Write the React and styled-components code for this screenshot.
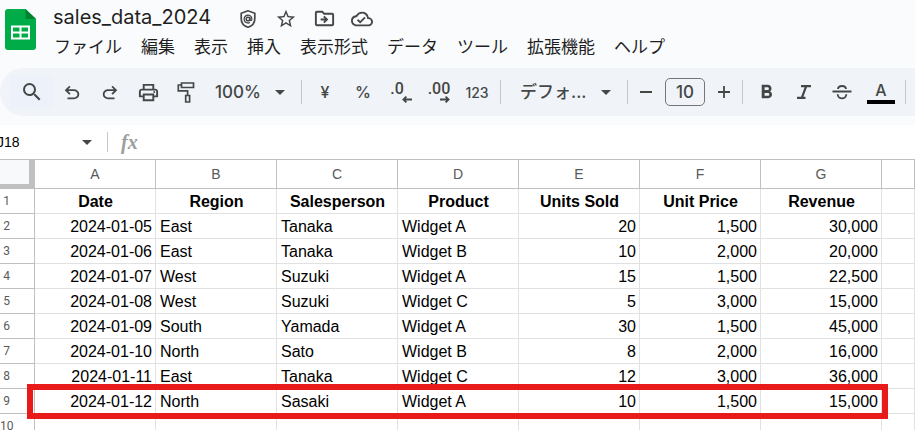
import React from 'react';
import styled, { createGlobalStyle } from 'styled-components';
import {
  MdStarBorder,
  MdOutlineDriveFileMove,
  MdOutlineCloudDone,
  MdSearch,
  MdOutlinePrint,
  MdFormatBold,
} from 'react-icons/md';

const GlobalStyle = createGlobalStyle`
  * {
    box-sizing: border-box;
  }

  body {
    margin: 0;
    background-color: #f9fbfd;
    overflow: hidden;
  }

  button, input, select {
    font: inherit;
    color: inherit;
    border: none;
    background: none;
    padding: 0;
    margin: 0;
  }
`;

const Page = styled.div`
  font-family: Inter, "Noto Sans CJK JP", sans-serif;
  color: #444746;
`;

// Header with the logo, file name and menus
const Header = styled.header`
  display: flex;
  gap: 17px;
  height: 68px;
  padding-left: 5px;
`;

const Logo = styled.svg`
  flex: none;
  width: 31px;
  height: 41px;
  margin-top: 9px;
`;

const HeaderMain = styled.div`
  flex: 1;
  min-width: 0;
`;

const TitleRow = styled.div`
  display: flex;
  align-items: center;
  height: 34px;
`;

const Title = styled.h1`
  margin: 0 18px 0 0;
  font-size: 20px;
  font-weight: 400;
  line-height: 34px;
  color: #1f1f1f;
`;

const TitleButton = styled.button`
  display: flex;
  align-items: center;
  justify-content: center;
  width: 38px;
  height: 34px;
  padding-top: 3px;
`;

const MenuBar = styled.nav`
  display: flex;
  gap: 19px;
  padding-left: 1px;
  white-space: nowrap;
`;

const MenuButton = styled.button`
  font-family: "Noto Sans CJK JP", sans-serif;
  font-size: 17px;
  line-height: 24px;
  color: #1f1f1f;
`;

// Toolbar
const Toolbar = styled.div`
  display: flex;
  align-items: center;
  height: 48px;
  padding-left: 10px;
  border-radius: 24px 0 0 24px;
  background-color: #f0f4f9;
  font-size: 17px;
  font-weight: 500;
  overflow: hidden;

  > * {
    flex: none;
  }
`;

const ToolButton = styled.button`
  display: flex;
  align-items: center;
  justify-content: center;
  width: ${({ $width }) => $width || 38}px;
  height: 34px;
  font-size: ${({ $small }) => ($small ? 14 : 16)}px;
`;

const SearchButton = styled(ToolButton)`
  background-color: #edf2fa;
`;

const Divider = styled.span`
  width: 1px;
  height: 24px;
  margin: 0 4px;
  background-color: #c7c7c7;
`;

const SelectWrap = styled.label`
  display: flex;
  align-items: center;
  justify-content: space-between;
  width: ${({ $width }) => $width}px;
  padding: 0 12px 0 ${({ $indent }) => $indent}px;
`;

const ToolSelect = styled.select`
  appearance: none;
  width: ${({ $width }) => $width}px;
  line-height: 24px;
`;

const SizeInput = styled.input`
  width: 40px;
  height: 28px;
  margin: 0 5px;
  border: 1px solid #747775;
  border-radius: 5px;
  text-align: center;
`;

const Decimal = styled.span`
  display: flex;
  flex-direction: column;
  align-items: flex-end;
  margin-right: ${({ $less }) => ($less ? 8 : 0)}px;
  font-family: Roboto, sans-serif;
  line-height: 16px;

  svg {
    margin-top: -1px;
    margin-right: ${({ $less }) => ($less ? -8 : 0)}px;
  }
`;

const TextColor = styled.span`
  width: 28px;
  border-bottom: 4px solid #000;
  line-height: 20px;
`;

// Formula bar
const FormulaBar = styled.div`
  display: flex;
  align-items: center;
  height: 34px;
  margin-top: 9px;
  background-color: #fff;
  font-family: "Liberation Sans", sans-serif;
`;

const NameBox = styled.input`
  width: 85px;
  margin-left: -3px;
  font-size: 14px;
  color: #000;
`;

const BarDivider = styled(Divider)`
  height: 20px;
  margin: 0 13px 0 15px;
`;

const FormulaLabel = styled.label`
  font-family: "Liberation Serif", serif;
  font-size: 20px;
  font-style: italic;
  font-weight: 700;
  color: #9a9d9c;
`;

const FormulaInput = styled.input`
  flex: 1;
  min-width: 0;
  margin-left: 8px;
  font-size: 14px;
`;

// Sheet grid
const Sheet = styled.table`
  width: 100%;
  table-layout: fixed;
  border-collapse: separate;
  border-spacing: 0;
  border-top: 1px solid #c0c0c0;
  background-color: #fff;
  font-family: "Liberation Sans", sans-serif;
  font-size: 16px;
  color: #000;
`;

const Col = styled.col`
  width: ${({ $width }) => ($width ? `${$width}px` : 'auto')};
`;

const Corner = styled.td`
  height: 29px;
  padding: 0;
  border-right: 6px solid #c0c0c0;
  border-bottom: 5px solid #c0c0c0;
  background-color: #f8f9fa;
`;

const ColumnHeader = styled.th`
  padding: 0;
  border-right: 1px solid #c0c0c0;
  border-bottom: 1px solid #c0c0c0;
  font-size: 14px;
  font-weight: 400;
  color: #575a5a;
`;

const RowHeader = styled.th`
  position: relative;
  height: 25px;
  padding: 0 21px 0 0;
  border-right: 1px solid #c0c0c0;
  border-bottom: 1px solid #c0c0c0;
  font-family: Roboto, sans-serif;
  font-size: 12px;
  font-weight: 400;
  line-height: 16px;
  color: #575a5a;
`;

const Cell = styled.td`
  height: 25px;
  padding: 2px 3px 0 4px;
  border-right: 1px solid #e1e1e1;
  border-bottom: 1px solid #e1e1e1;
  font-weight: ${({ $bold }) => ($bold ? 700 : 400)};
  line-height: 18px;
  text-align: ${({ $align }) => $align};
  white-space: nowrap;
`;

// Red frame laid over the highlighted row
const RowFrame = styled.span`
  position: absolute;
  z-index: 1;
  top: -5px;
  left: 27px;
  width: 861px;
  height: 35px;
  border: 6px solid #e81a1a;
  pointer-events: none;
`;

const menus = ['ファイル', '編集', '表示', '挿入', '表示形式', 'データ', 'ツール', '拡張機能', 'ヘルプ'];
const letters = ['A', 'B', 'C', 'D', 'E', 'F', 'G'];
const aligns = ['right', 'left', 'left', 'left', 'right', 'right', 'right'];

const rows = [
  ['Date', 'Region', 'Salesperson', 'Product', 'Units Sold', 'Unit Price', 'Revenue'],
  ['2024-01-05', 'East', 'Tanaka', 'Widget A', '20', '1,500', '30,000'],
  ['2024-01-06', 'East', 'Tanaka', 'Widget B', '10', '2,000', '20,000'],
  ['2024-01-07', 'West', 'Suzuki', 'Widget A', '15', '1,500', '22,500'],
  ['2024-01-08', 'West', 'Suzuki', 'Widget C', '5', '3,000', '15,000'],
  ['2024-01-09', 'South', 'Yamada', 'Widget A', '30', '1,500', '45,000'],
  ['2024-01-10', 'North', 'Sato', 'Widget B', '8', '2,000', '16,000'],
  ['2024-01-11', 'East', 'Tanaka', 'Widget C', '12', '3,000', '36,000'],
  ['2024-01-12', 'North', 'Sasaki', 'Widget A', '10', '1,500', '15,000'],
  ['', '', '', '', '', '', ''],
];
const highlightedRow = 9;

const SheetsLogo = () => (
  <Logo viewBox="0 0 31 41" aria-hidden="true">
    <path d="M3 0h17.500L31 10v28a3 3 0 0 1-3 3H3a3 3 0 0 1-3-3V3a3 3 0 0 1 3-3z" fill="#00ac47" />
    <path d="M20.500 0L31 10H20.500z" fill="#00832d" />
    <path d="M7 17.500h17v12H7zM15.500 17.500v12M7 23.500h17" fill="none" stroke="#fff" strokeWidth="2" />
  </Logo>
);

const ShieldIcon = () => (
  <svg width="18" height="20" viewBox="0 0 18 20" fill="none" stroke="currentColor" strokeWidth="1.700">
    <path d="M9 1.800L2.200 4.300v5.400c0 4 2.800 7.200 6.800 8.500 4-1.300 6.800-4.500 6.800-8.500V4.300z" />
    <circle cx="9" cy="10" r="1.800" strokeWidth="1.500" />
    <path d="M10.900 8.200v2.300c0 1.500 2 1.400 2-.5a3.900 3.900 0 1 0-2 3.500" strokeWidth="1.300" />
  </svg>
);

const undoPath =
  'M7 19v-2h7.100q1.575 0 2.737-1T18 13.500 16.838 11 14.100 10H7.800l2.600 2.600L9 14 4 9l5-5 1.400 1.400L7.800 8h6.300q2.425 0 4.163 1.575T20 13.500t-1.737 3.925T14.100 19z';

const UndoIcon = () => (
  <svg width="22" height="20" viewBox="0 0 24 22" fill="currentColor">
    <path d={undoPath} />
  </svg>
);

const RedoIcon = () => (
  <svg width="22" height="20" viewBox="0 0 24 22" fill="currentColor">
    <path d={undoPath} transform="matrix(-1 0 0 1 24 0)" />
  </svg>
);

const RollerIcon = () => (
  <svg width="20" height="24" viewBox="0 0 20 24" fill="none" stroke="currentColor" strokeWidth="1.700">
    <path d="M5.500 3h12v4.500h-12zM5.500 5H2.300v5.800h9.300V15M9.700 15.500h3.900V22H9.700z" />
  </svg>
);

const ItalicIcon = () => (
  <svg width="16" height="16" viewBox="0 0 16 16" fill="none" stroke="currentColor" strokeWidth="2.200">
    <path d="M5 2.200h10M1 13.800h8.500M10.200 2.200L5.800 13.800" />
  </svg>
);

const StrikeIcon = () => (
  <svg width="20" height="16" viewBox="0 0 20 16" fill="none" stroke="currentColor" strokeWidth="1.900">
    <path d="M.5 7.500h19M6 5C6.300 1 13.700 1 14 5M5.700 10.200c0 5.600 8.600 5.600 8.600 0" />
  </svg>
);

const ArrowIcon = ({ right }) => (
  <svg width="10" height="7" viewBox="0 0 10 7" fill="none" stroke="currentColor" strokeWidth="1.800">
    <path d={right ? 'M0 3.500h8.500M5.600.6l3 2.900-3 2.900' : 'M10 3.500H1.500M4.400.6l-3 2.900 3 2.900'} />
  </svg>
);

const Caret = () => (
  <svg width="10" height="5" viewBox="0 0 10 5" fill="currentColor" aria-hidden="true">
    <path d="M0 0h10L5 5z" />
  </svg>
);

const SignIcon = ({ plus }) => (
  <svg width="12" height="12" viewBox="0 0 12 12" stroke="currentColor" strokeWidth="1.800">
    <path d={plus ? 'M0 6h12M6 0v12' : 'M0 6h12'} />
  </svg>
);

const DocumentHeader = () => (
  <Header>
    <SheetsLogo />
    <HeaderMain>
      <TitleRow>
        <Title>sales_data_2024</Title>
        <TitleButton aria-label="Security"><ShieldIcon /></TitleButton>
        <TitleButton aria-label="Star"><MdStarBorder size={22} /></TitleButton>
        <TitleButton aria-label="Move"><MdOutlineDriveFileMove size={23} /></TitleButton>
        <TitleButton aria-label="Saved"><MdOutlineCloudDone size={22} /></TitleButton>
      </TitleRow>
      <MenuBar>
        {menus.map(menu => (
          <MenuButton key={menu}>{menu}</MenuButton>
        ))}
      </MenuBar>
    </HeaderMain>
  </Header>
);

const SheetToolbar = () => (
  <Toolbar>
    <SearchButton $width={43} aria-label="Search"><MdSearch size={24} /></SearchButton>
    <ToolButton aria-label="Undo"><UndoIcon /></ToolButton>
    <ToolButton aria-label="Redo"><RedoIcon /></ToolButton>
    <ToolButton aria-label="Print"><MdOutlinePrint size={23} /></ToolButton>
    <ToolButton aria-label="Paint format"><RollerIcon /></ToolButton>
    <SelectWrap $width={92} $indent={10}>
      <ToolSelect $width={52} aria-label="Zoom">
        <option>100%</option>
      </ToolSelect>
      <Caret />
    </SelectWrap>
    <Divider />
    <ToolButton>¥</ToolButton>
    <ToolButton>%</ToolButton>
    <ToolButton aria-label="Decrease decimal places">
      <Decimal $less>.0<ArrowIcon /></Decimal>
    </ToolButton>
    <ToolButton aria-label="Increase decimal places">
      <Decimal>.00<ArrowIcon right /></Decimal>
    </ToolButton>
    <ToolButton $small>123</ToolButton>
    <Divider />
    <SelectWrap $width={118} $indent={15}>
      <ToolSelect $width={72} aria-label="Font">
        <option>デフォ...</option>
      </ToolSelect>
      <Caret />
    </SelectWrap>
    <Divider />
    <ToolButton $width={28} aria-label="Decrease font size"><SignIcon /></ToolButton>
    <SizeInput aria-label="Font size" defaultValue="10" />
    <ToolButton $width={28} aria-label="Increase font size"><SignIcon plus /></ToolButton>
    <Divider />
    <ToolButton aria-label="Bold"><MdFormatBold size={23} /></ToolButton>
    <ToolButton aria-label="Italic"><ItalicIcon /></ToolButton>
    <ToolButton aria-label="Strikethrough"><StrikeIcon /></ToolButton>
    <ToolButton $width={40}><TextColor>A</TextColor></ToolButton>
    <Divider />
  </Toolbar>
);

const SheetGrid = () => (
  <Sheet>
    <colgroup>
      <Col $width={35} />
      {letters.map(letter => (
        <Col key={letter} $width={121} />
      ))}
      <Col />
    </colgroup>
    <thead>
      <tr>
        <Corner />
        {letters.map(letter => (
          <ColumnHeader key={letter} scope="col">{letter}</ColumnHeader>
        ))}
        <ColumnHeader />
      </tr>
    </thead>
    <tbody>
      {rows.map((row, index) => (
        <tr key={index}>
          <RowHeader scope="row">
            {index + 1}
            {index + 1 === highlightedRow && <RowFrame />}
          </RowHeader>
          {row.map((value, col) => (
            <Cell key={col} $bold={index === 0} $align={index === 0 ? 'center' : aligns[col]}>
              {value}
            </Cell>
          ))}
          <Cell />
        </tr>
      ))}
    </tbody>
  </Sheet>
);

const App = () => {
  return (
    <Page>
      <GlobalStyle />
      <DocumentHeader />
      <SheetToolbar />
      <FormulaBar>
        <NameBox aria-label="Name box" defaultValue="J18" />
        <Caret />
        <BarDivider />
        <FormulaLabel htmlFor="formula">fx</FormulaLabel>
        <FormulaInput id="formula" />
      </FormulaBar>
      <SheetGrid />
    </Page>
  );
};

export default App;
